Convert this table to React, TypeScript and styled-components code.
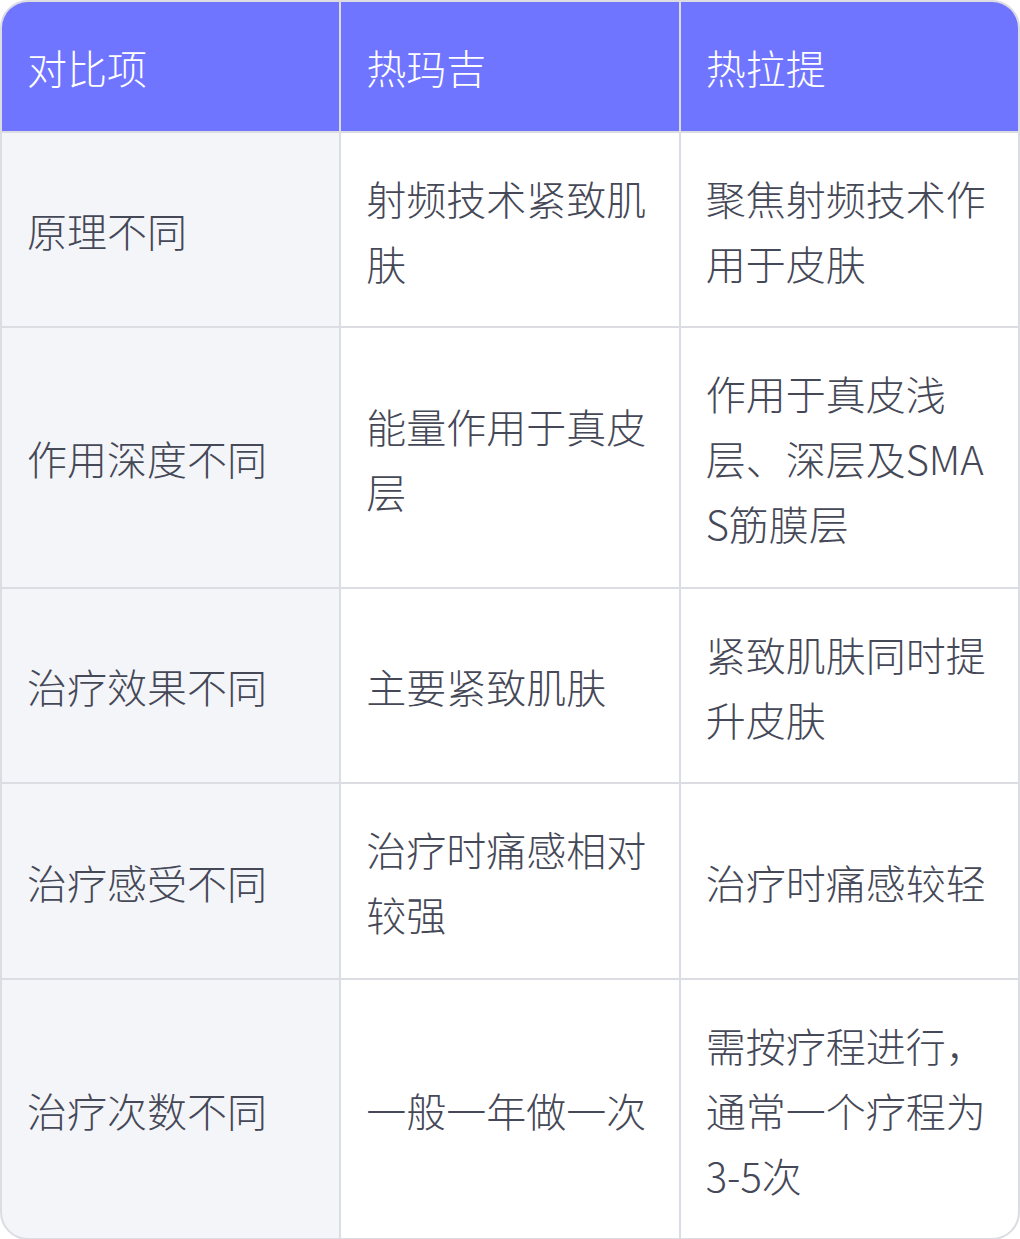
import styled, { createGlobalStyle } from "styled-components";

const GlobalStyle = createGlobalStyle`
  html, body {
    margin: 0;
    padding: 0;
    background: #ffffff;
  }
  * {
    box-sizing: border-box;
  }
`;

const Table = styled.div`
  width: 1020px;
  border: 2px solid #dcdde3;
  border-radius: 28px;
  overflow: hidden;
  display: grid;
  grid-template-columns: 1fr 1fr 1fr;
  gap: 2px;
  background: #dcdde3;
  font-family: "Noto Sans CJK SC", "Noto Sans", sans-serif;
  font-weight: 300;
`;

const Cell = styled.div<{ $head?: boolean; $first?: boolean }>`
  display: flex;
  align-items: center;
  padding: 33px 26px 30.5px 25px;
  font-size: 40px;
  line-height: 65px;
  word-break: break-all;
  color: ${({ $head }) => ($head ? "#ffffff" : "#454857")};
  background: ${({ $head, $first }) =>
    $head ? "#7075ff" : $first ? "#f4f5f9" : "#ffffff"};
`;

const header = ["对比项", "热玛吉", "热拉提"];

const rows = [
  ["原理不同", "射频技术紧致肌肤", "聚焦射频技术作用于皮肤"],
  ["作用深度不同", "能量作用于真皮层", "作用于真皮浅层、深层及SMAS筋膜层"],
  ["治疗效果不同", "主要紧致肌肤", "紧致肌肤同时提升皮肤"],
  ["治疗感受不同", "治疗时痛感相对较强", "治疗时痛感较轻"],
  ["治疗次数不同", "一般一年做一次", "需按疗程进行，通常一个疗程为3-5次"],
];

export default function App() {
  return (
    <>
      <GlobalStyle />
      <Table>
        {header.map((h) => (
          <Cell key={h} $head>
            {h}
          </Cell>
        ))}
        {rows.map((row) =>
          row.map((text, i) => (
            <Cell key={row[0] + i} $first={i === 0}>
              {text}
            </Cell>
          ))
        )}
      </Table>
    </>
  );
}
